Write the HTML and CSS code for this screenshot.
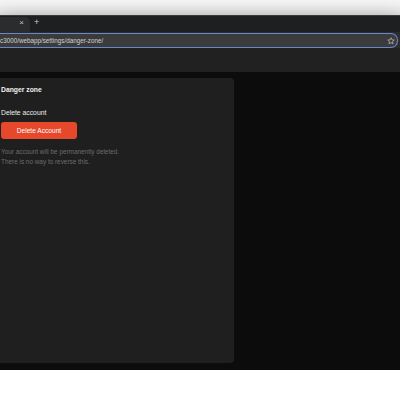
FILE: index.html
```html
<!DOCTYPE html>
<html lang="en">
<head>
    <meta charset="UTF-8">
    <title>Danger zone</title>
    <link rel="stylesheet" href="styles.css">
</head>
<body>
    <div class="top"></div>
    <div class="window">
        <div class="tabbar">
            <div class="tab"><span class="close">&times;</span></div>
            <span class="newtab">+</span>
        </div>
        <div class="addrbar">
            <div class="addr">
                <span class="url">c3000/webapp/settings/danger-zone/</span>
                <svg class="star" width="8" height="8" viewBox="0 0 16 16">
                    <path d="M8 1.5l1.9 4.2 4.6.4-3.5 3 1.1 4.5L8 11.2l-4.1 2.4 1.1-4.5-3.5-3 4.6-.4z" fill="none" stroke="#b0b0b0" stroke-width="1.6" stroke-linejoin="round"/>
                </svg>
            </div>
        </div>
        <div class="toolbar"></div>
        <div class="content">
            <div class="card">
                <h2 class="title">Danger zone</h2>
                <h3 class="label">Delete account</h3>
                <button class="danger-btn">Delete Account</button>
                <p class="note">Your account will be permanently deleted.<br>There is no way to reverse this.</p>
            </div>
        </div>
    </div>
</body>
</html>
```

FILE: styles.css
```css
*{
    margin: 0;
    padding: 0;
    box-sizing: border-box;
}
body{
    background: #fff;
    font-family: "Liberation Sans", Arial, sans-serif;
    overflow: hidden;
}
.top{
    height: 15px;
    background: linear-gradient(#f6f6f6, #e8e8e8);
}
.window{
    height: 355px;
    background: #1e1f21;
    box-shadow: 0 12px 22px 2px rgba(0,0,0,0.7);
    position: relative;
}
.tabbar{
    height: 17px;
    display: flex;
    align-items: flex-end;
    border-top: 1px solid #3a3a3a;
}
.tab{
    width: 30px;
    height: 15px;
    background: #2b2c2e;
    border-radius: 0 5px 0 0;
    display: flex;
    justify-content: flex-end;
    padding: 1px 6px 0 0;
}
.close{
    color: #c4c4c4;
    font-size: 8px;
    line-height: 10px;
}
.newtab{
    color: #c8c8c8;
    font-size: 9px;
    line-height: 11px;
    margin: 0 0 4px 4px;
}
.addrbar{
    height: 16px;
    background: #2b2c2e;
    padding: 1px 2px 0 0;
}
.addr{
    height: 15px;
    border: 1.5px solid #6a87c9;
    border-left: none;
    border-radius: 0 7px 7px 0;
    background: #3b3b3d;
    display: flex;
    align-items: center;
    justify-content: space-between;
    padding-right: 2px;
}
.url{
    color: #d2d2d2;
    font-size: 6.3px;
}
.star{
    display: block;
}
.toolbar{
    height: 24px;
    background: #212121;
}
.content{
    height: 298px;
    background: #0c0c0c;
    padding-top: 6px;
}
.card{
    width: 234px;
    height: 285px;
    background: #1f1f1f;
    border-radius: 0 4px 4px 0;
    padding: 8px 0 0 1px;
}
.title{
    color: #f0f0f0;
    font-size: 6.8px;
    font-weight: 600;
    line-height: 8px;
}
.label{
    color: #ececec;
    font-size: 6.8px;
    font-weight: 500;
    line-height: 8px;
    margin-top: 15px;
}
.danger-btn{
    display: block;
    width: 76px;
    height: 17px;
    margin-top: 5px;
    background: #e5482a;
    color: #fff;
    border: none;
    border-radius: 3px;
    font-family: inherit;
    font-size: 6.6px;
}
.note{
    color: #6c6c6c;
    font-size: 6.4px;
    line-height: 9.5px;
    margin-top: 8px;
}
```
